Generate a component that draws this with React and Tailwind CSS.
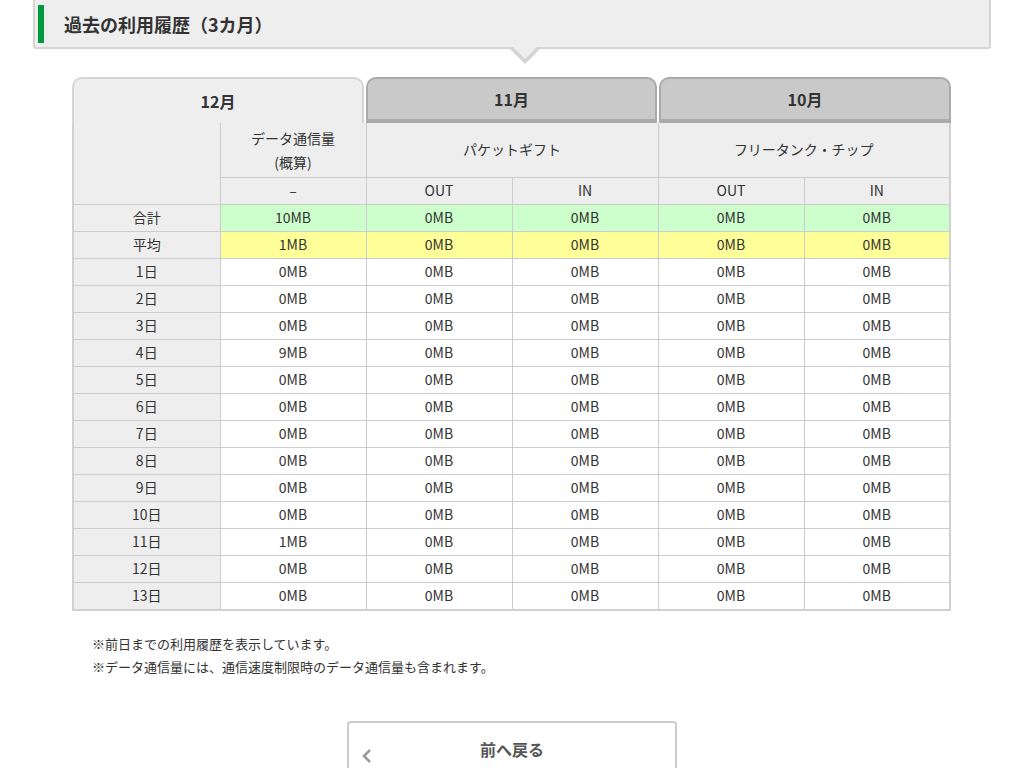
import React from "react";

const days = ["0MB","0MB","0MB","9MB","0MB","0MB","0MB","0MB","0MB","0MB","1MB","0MB","0MB"];
const td = "border border-[#ccc] text-center h-[27px] p-0";

export default function App() {
  return (
    <div className="w-[1024px] h-[768px] overflow-hidden bg-white text-[#333] text-[14px]" style={{fontFamily:'"Noto Sans CJK JP", sans-serif'}}>
      <div className="relative mx-[33px] h-[49px] border-2 border-t-0 border-[#d4d4d4] bg-[#eeeeee] rounded-b-[3px] flex items-center">
        <div className="ml-[3px] w-[6px] h-[38px] bg-[#009a3e]"></div>
        <div className="ml-[20px] text-[18px] font-bold leading-none text-[#333]">過去の利用履歴（3カ月）</div>
        <div className="absolute left-[473px] top-[47px] w-0 h-0 border-x-[17px] border-x-transparent border-t-[17px] border-t-[#d4d4d4]"></div>
        <div className="absolute left-[476px] top-[45px] w-0 h-0 border-x-[14px] border-x-transparent border-t-[14px] border-t-[#eeeeee]"></div>
      </div>
      <div className="ml-[72px] mt-[28px] w-[879px]">
        <div className="flex gap-[2px] h-[46px]">
          <div className="w-[292px] border-2 border-b-0 border-[#d4d4d4] rounded-t-[10px] bg-[#eeeeee] flex items-center justify-center font-bold text-[16px]">12月</div>
          <div className="w-[291px] border-2 border-b-[4px] border-[#aaa] rounded-t-[10px] bg-[#c9c9c9] flex items-center justify-center font-bold text-[16px]">11月</div>
          <div className="w-[292px] border-2 border-b-[4px] border-[#aaa] rounded-t-[10px] bg-[#c9c9c9] flex items-center justify-center font-bold text-[16px]">10月</div>
        </div>
        <div className="border-2 border-t-0 border-[#d0d0d0]">
          <table className="w-full border-collapse table-fixed">
            <colgroup>
              <col className="w-[146px]"/><col className="w-[146px]"/><col className="w-[146px]"/><col className="w-[146px]"/><col className="w-[146px]"/><col/>
            </colgroup>
            <tbody>
              <tr className="h-[54px] bg-[#eeeeee]">
                <td rowSpan={2} className="border border-[#ccc] border-l-0 border-t-0"></td>
                <td className="border border-[#ccc] border-t-0 text-center leading-[24px] font-normal">データ通信量<br/>(概算)</td>
                <td colSpan={2} className="border border-[#ccc] border-t-0 text-center">パケットギフト</td>
                <td colSpan={2} className="border border-[#ccc] border-t-0 border-r-0 text-center">フリータンク・チップ</td>
              </tr>
              <tr className="bg-[#eeeeee]">
                <td className={td}>–</td><td className={td}>OUT</td><td className={td}>IN</td><td className={td}>OUT</td><td className={td + " border-r-0"}>IN</td>
              </tr>
              <tr className="bg-[#ccffcc]">
                <td className={td + " bg-[#eeeeee] border-l-0"}>合計</td>
                {["10MB","0MB","0MB","0MB","0MB"].map((v,i)=><td key={i} className={td + (i===4?" border-r-0":"")}>{v}</td>)}
              </tr>
              <tr className="bg-[#ffff99]">
                <td className={td + " bg-[#eeeeee] border-l-0"}>平均</td>
                {["1MB","0MB","0MB","0MB","0MB"].map((v,i)=><td key={i} className={td + (i===4?" border-r-0":"")}>{v}</td>)}
              </tr>
              {days.map((d,n)=>(
                <tr key={n} className="bg-white">
                  <td className={td + " bg-[#eeeeee] border-l-0" + (n===12?" border-b-0":"")}>{n+1}日</td>
                  {[d,"0MB","0MB","0MB","0MB"].map((v,i)=><td key={i} className={td + (i===4?" border-r-0":"") + (n===12?" border-b-0":"")}>{v}</td>)}
                </tr>
              ))}
            </tbody>
          </table>
        </div>
      </div>
      <div className="ml-[92px] mt-[21px] text-[13px] leading-[23px]">
        <p>※前日までの利用履歴を表示しています。</p>
        <p>※データ通信量には、通信速度制限時のデータ通信量も含まれます。</p>
      </div>
      <div className="ml-[347px] mt-[43px] w-[330px] h-[60px] border-2 border-[#ccc] rounded-t-[4px] relative flex items-center justify-center">
        <svg className="absolute left-[12px] top-[25px]" width="12" height="16" viewBox="0 0 12 16"><path d="M9 2 L3 8 L9 14" fill="none" stroke="#999" strokeWidth="2.5"/></svg>
        <span className="font-bold text-[16px] text-[#555] -mt-[4px]">前へ戻る</span>
      </div>
    </div>
  );
}
